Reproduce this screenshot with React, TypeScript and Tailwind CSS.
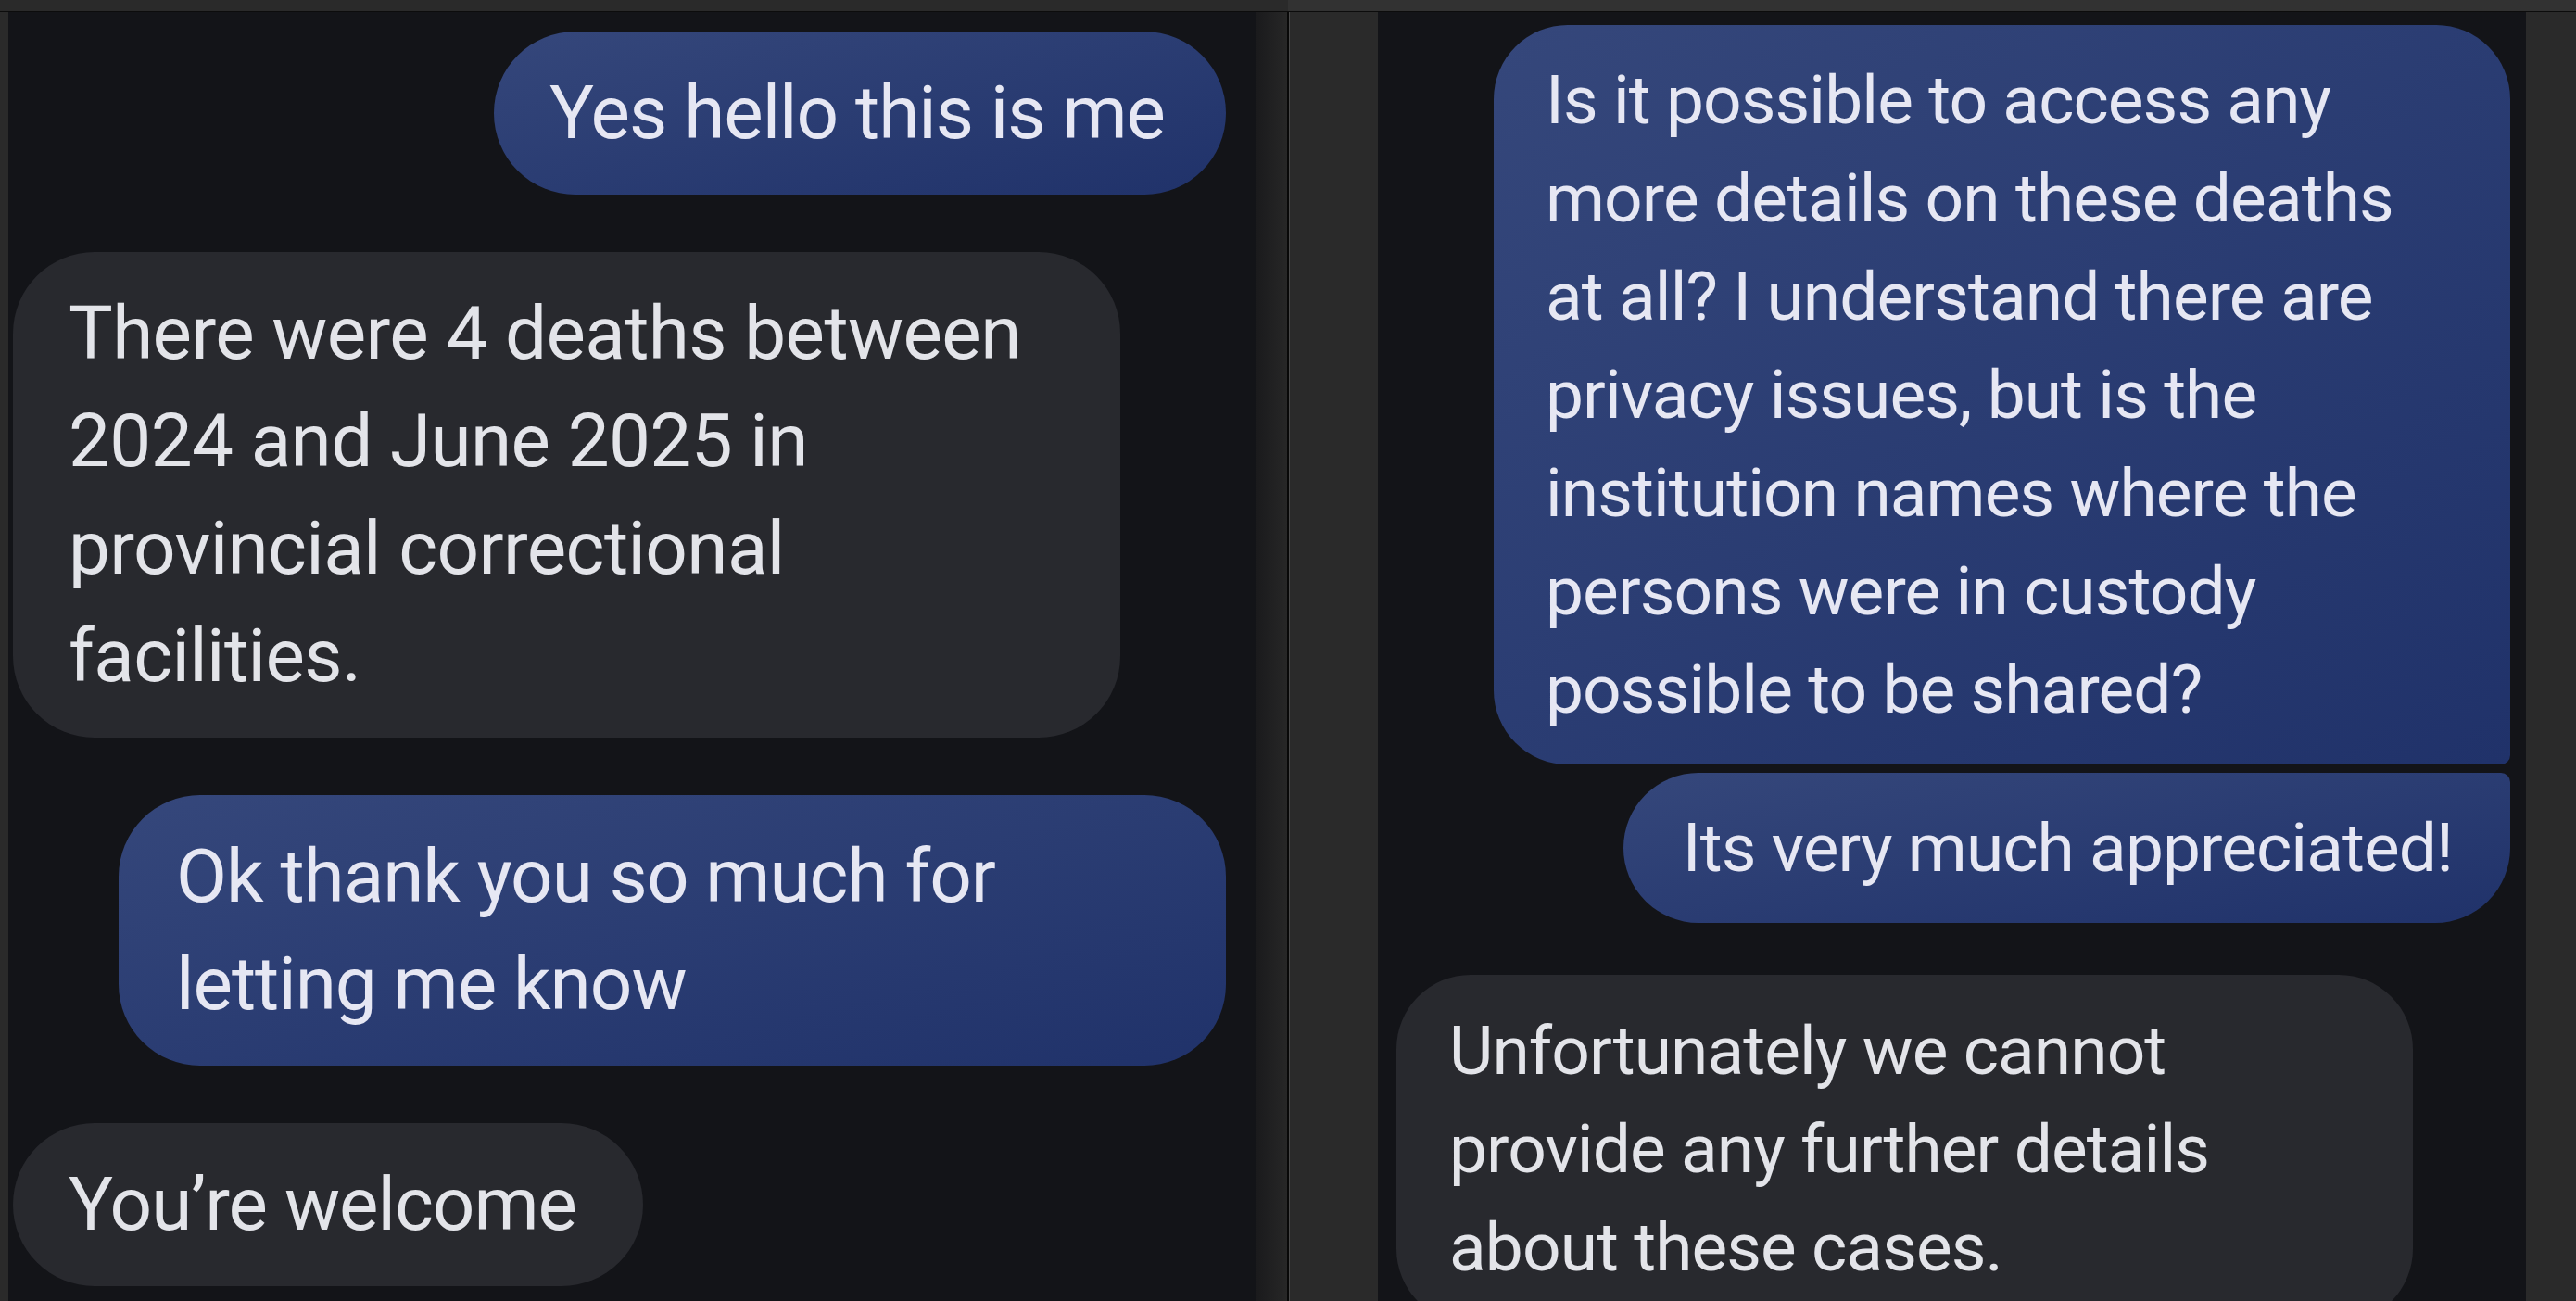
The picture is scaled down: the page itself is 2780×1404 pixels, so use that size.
import React from "react";

const font = { fontFamily: "Roboto, 'Noto Sans', sans-serif" };

function Sent({ children, className = "" }: { children: React.ReactNode; className?: string }) {
  return (
    <div
      className={
        "self-end bg-linear-to-br from-[#35477b] to-[#20326a] text-[#e6e7f3] " +
        className
      }
    >
      {children}
    </div>
  );
}

function Received({ children, className = "" }: { children: React.ReactNode; className?: string }) {
  return <div className={"self-start bg-[#28292e] text-[#e3e4e9] " + className}>{children}</div>;
}

export default function App() {
  return (
    <div className="w-[2780px] h-[1404px] overflow-hidden bg-[#2a2a2a] flex flex-col" style={font}>
      <div className="h-[13px] shrink-0 flex border-b border-[#0c0c0c]">
        <div className="w-[1390px] bg-[#2a2a2a]" />
        <div className="flex-1 bg-[#323232]" />
      </div>
      <div className="flex-1 flex min-h-0">
        <div className="w-[9px] shrink-0 bg-[#2a2a2a]" />
        {/* Left conversation */}
        <div className="w-[1346px] shrink-0 bg-[#131418] flex flex-col gap-[62px] pt-[21px] pl-[5px] pr-[32px] overflow-hidden">
          <Sent className="rounded-full pl-[60px] pr-[66px] py-[30px] text-[80px] leading-[116px] tracking-[-1px]">
            Yes hello this is me
          </Sent>
          <Received className="w-[1195px] rounded-[88px] pl-[60px] pr-[80px] py-[30px] text-[80px] leading-[116px] tracking-[-0.6px]">
            There were 4 deaths between 2024 and June 2025 in provincial correctional facilities.
          </Received>
          <Sent className="w-[1195px] rounded-[88px] pl-[62px] pr-[60px] py-[30px] text-[80px] leading-[116px] tracking-[-1px]">
            Ok thank you so much for letting me know
          </Sent>
          <Received className="rounded-full pl-[60px] pr-[72px] py-[30px] text-[80px] leading-[116px] tracking-[-1px]">
            You’re welcome
          </Received>
        </div>
        {/* Divider */}
        <div className="w-[34px] shrink-0 bg-linear-to-r from-[#1a1a1c] to-[#272727]" />
        <div className="w-[2px] shrink-0 bg-[#080808]" />
        <div className="w-[1px] shrink-0 bg-[#4a4a4a]" />
        <div className="w-[95px] shrink-0 bg-[#2a2a2a]" />
        {/* Right conversation */}
        <div className="w-[1239px] shrink-0 bg-[#131418] flex flex-col pt-[14px] pl-[20px] pr-[17px] overflow-hidden">
          <Sent className="w-[1097px] rounded-[80px] rounded-br-[10px] pl-[56px] pr-[62px] py-[28px] text-[73px] leading-[106px] tracking-[-0.9px]">
            Is it possible to access any more details on these deaths at all? I understand there are privacy issues, but is the institution names where the persons were in custody possible to be shared?
          </Sent>
          <Sent className="mt-[9px] rounded-[81px] rounded-tr-[10px] pl-[64px] pr-[62px] py-[28px] text-[73px] leading-[106px] tracking-[-0.9px]">
            Its very much appreciated!
          </Sent>
          <Received className="mt-[56px] w-[1097px] rounded-[80px] pl-[57px] pr-[62px] py-[29px] text-[73px] leading-[106px] tracking-[-0.9px] shrink-0">
            Unfortunately we cannot provide any further details about these cases.
          </Received>
        </div>
        <div className="flex-1 bg-[#2a2a2a]" />
      </div>
    </div>
  );
}
